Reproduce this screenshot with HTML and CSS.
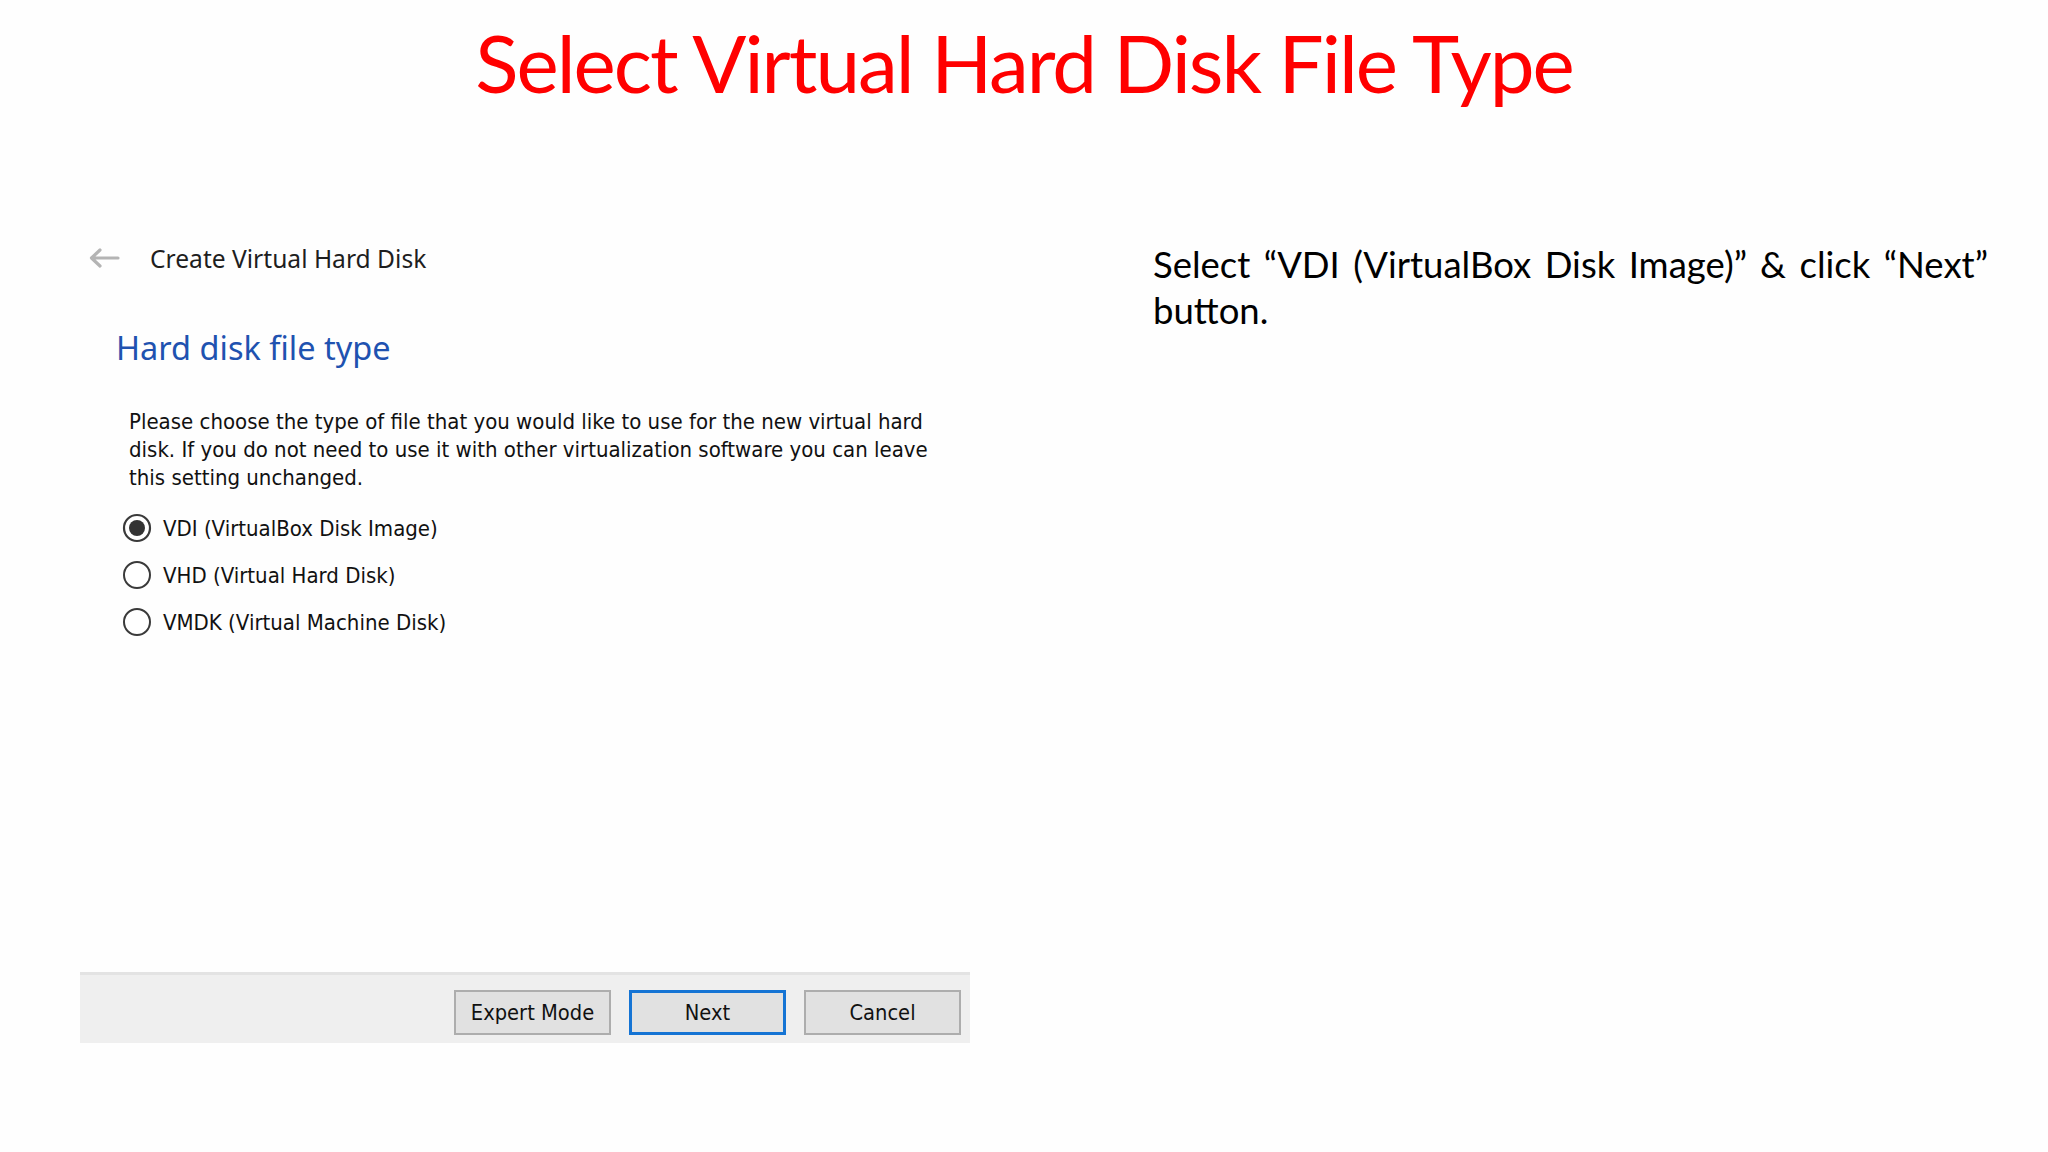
FILE: index.html
```html
<!DOCTYPE html>
<html>
<head>
<meta charset="utf-8">
<link rel="stylesheet" href="styles.css">
</head>
<body>
<h1 class="title">Select Virtual Hard Disk File Type</h1>
<main class="main">
  <section class="dialog">
    <header class="dlg-head">
      <svg class="back" width="32" height="20" viewBox="0 0 32 20">
        <path d="M30 10 H4 M12 2 L3.5 10 L12 18" fill="none" stroke="#b4b4b4" stroke-width="3.2" stroke-linecap="round" stroke-linejoin="round"/>
      </svg>
      <span class="dlg-title">Create Virtual Hard Disk</span>
    </header>
    <div class="dlg-body">
      <h2 class="page-title">Hard disk file type</h2>
      <p class="desc">Please choose the type of file that you would like to use for the new virtual hard disk. If you do not need to use it with other virtualization software you can leave this setting unchanged.</p>
      <ul class="options">
        <li class="option">
          <svg class="radio" width="30" height="30" viewBox="0 0 30 30"><circle cx="15" cy="15" r="13" fill="#fff" stroke="#3a3a3a" stroke-width="2.2"/><circle cx="15" cy="15" r="8" fill="#333"/></svg>
          <span>VDI (VirtualBox Disk Image)</span>
        </li>
        <li class="option">
          <svg class="radio" width="30" height="30" viewBox="0 0 30 30"><circle cx="15" cy="15" r="13" fill="#fff" stroke="#3a3a3a" stroke-width="2"/></svg>
          <span>VHD (Virtual Hard Disk)</span>
        </li>
        <li class="option">
          <svg class="radio" width="30" height="30" viewBox="0 0 30 30"><circle cx="15" cy="15" r="13" fill="#fff" stroke="#3a3a3a" stroke-width="2"/></svg>
          <span>VMDK (Virtual Machine Disk)</span>
        </li>
      </ul>
    </div>
    <footer class="dlg-foot">
      <button class="btn">Expert Mode</button>
      <button class="btn btn-default">Next</button>
      <button class="btn">Cancel</button>
    </footer>
  </section>
  <p class="note">Select “VDI (VirtualBox Disk Image)” &amp; click “Next” button.</p>
</main>
</body>
</html>
```
FILE: styles.css
```css
html, body {
  margin: 0;
  padding: 0;
  background: #fefefe;
}
body {
  width: 2048px;
  height: 1152px;
  overflow: hidden;
  font-family: "Lato", "Liberation Sans", sans-serif;
}
.title {
  margin: 0;
  padding-top: 14px;
  height: 112px;
  box-sizing: border-box;
  text-align: center;
  color: #ff0000;
  font-family: "Lato", "Liberation Sans", sans-serif;
  font-weight: 400;
  font-size: 80px;
  line-height: 96px;
  letter-spacing: -2px;
}
.main {
  display: flex;
  align-items: flex-start;
}
.dialog {
  margin-left: 80px;
  margin-top: 118px;
  width: 890px;
  height: 813px;
  display: flex;
  flex-direction: column;
}
.dlg-head {
  display: flex;
  align-items: center;
  height: 56px;
}
.back {
  margin-left: 8px;
}
.dlg-title {
  margin-left: 30px;
  font-family: "Noto Sans", "Open Sans", sans-serif;
  font-size: 24.6px;
  color: #1e1e1e;
}
.dlg-body {
  flex: 1;
  padding-left: 36px;
}
.page-title {
  margin: 42px 0 0 0;
  font-family: "Noto Sans", "Open Sans", sans-serif;
  font-weight: 400;
  font-size: 32.5px;
  line-height: 40px;
  color: #1f52b0;
}
.desc {
  margin: 40px 0 0 13px;
  width: 825px;
  font-family: "DejaVu Sans Condensed", "DejaVu Sans", sans-serif;
  font-stretch: condensed;
  font-size: 22px;
  line-height: 28px;
  color: #111;
}
.options {
  list-style: none;
  margin: 21px 0 0 6px;
  padding: 0;
  display: flex;
  flex-direction: column;
  gap: 17px;
}
.option {
  display: flex;
  align-items: center;
  gap: 11px;
  height: 30px;
  font-family: "DejaVu Sans Condensed", "DejaVu Sans", sans-serif;
  font-stretch: condensed;
  font-size: 22px;
  color: #111;
}
.dlg-foot {
  height: 71px;
  box-sizing: border-box;
  background: #efefef;
  border-top: 3px solid #e3e3e3;
  display: flex;
  justify-content: flex-end;
  align-items: flex-start;
  gap: 18px;
  padding: 15px 9px 0 0;
}
.btn {
  width: 157px;
  height: 45px;
  box-sizing: border-box;
  background: #e1e1e1;
  border: 2px solid #adadad;
  font-family: "DejaVu Sans Condensed", "DejaVu Sans", sans-serif;
  font-stretch: condensed;
  font-size: 21.7px;
  color: #111;
  padding: 0;
}
.btn-default {
  border: 3px solid #1574d4;
}
.note {
  margin: 129px 60px 0 auto;
  width: 835px;
  text-align: justify;
  font-family: "Lato", "Liberation Sans", sans-serif;
  font-size: 36.5px;
  line-height: 46px;
  color: #000;
}
```
